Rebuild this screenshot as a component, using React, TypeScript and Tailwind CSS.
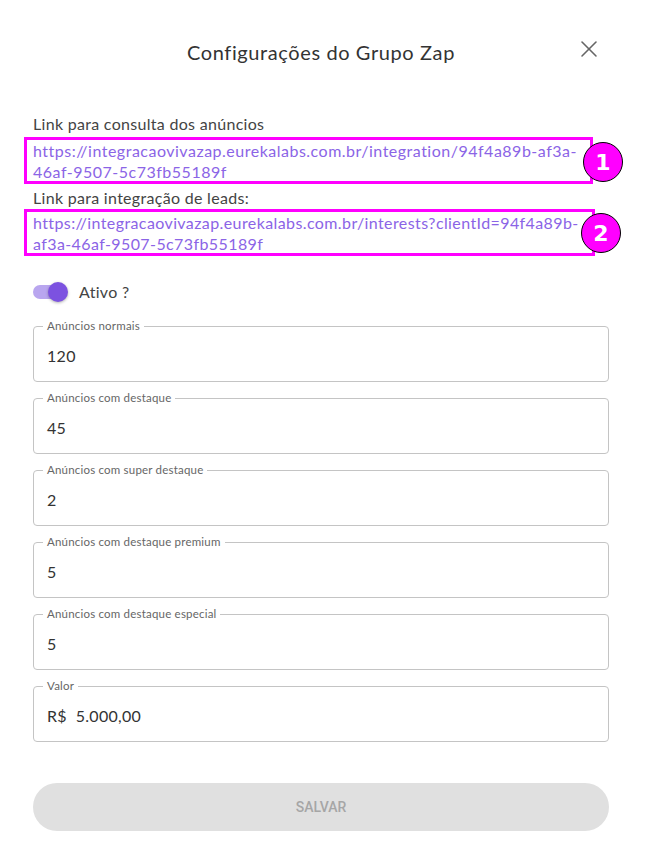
import { X } from "lucide-react";

const fields = [
  { label: "Anúncios normais", value: "120" },
  { label: "Anúncios com destaque", value: "45" },
  { label: "Anúncios com super destaque", value: "2" },
  { label: "Anúncios com destaque premium", value: "5" },
  { label: "Anúncios com destaque especial", value: "5" },
  { label: "Valor", value: "R$  5.000,00" },
];

const Badge = ({ n, className }: { n: number; className: string }) => (
  <span
    className={`absolute flex h-10 w-10 items-center justify-center rounded-full border border-black bg-[#ff00ff] text-[22px] font-bold text-white ${className}`}
    style={{ fontFamily: "'DejaVu Sans', sans-serif" }}
  >
    {n}
  </span>
);

const LinkBox = ({
  lines,
  badge,
  className,
  textClass,
}: {
  lines: string[];
  badge: number;
  className: string;
  textClass: string;
}) => (
  <div className={`relative -ml-[9px] h-[47px] border-[3px] border-[#ff00ff] px-[6px] ${className}`}>
    {lines.map((l) => (
      <div key={l} className={`whitespace-nowrap text-[16px] leading-[21px] text-[#8b64e6] ${textClass}`}>
        {l}
      </div>
    ))}
    <Badge n={badge} className={badge === 1 ? "-right-[33px] top-[2px]" : "-right-[29px] top-[1px]"} />
  </div>
);

const App = () => {
  return (
    <div className="min-h-[850px] bg-white" style={{ fontFamily: "Lato, sans-serif" }}>
      <div className="pl-[33px] pr-[43px]">
        <div className="relative h-[113px] pt-[40px] text-center">
          <h1 className="text-[20px] leading-[24px] tracking-[0.6px] text-[#333]">Configurações do Grupo Zap</h1>
          <X className="absolute right-[6px] top-[35px] h-[28px] w-[28px] text-[#666]" strokeWidth={1.3} />
        </div>

        <div className="text-[16px] leading-[22px] tracking-[0.3px] text-[#444]">Link para consulta dos anúncios</div>
        <LinkBox
          lines={["https://integracaovivazap.eurekalabs.com.br/integration/94f4a89b-af3a-", "46af-9507-5c73fb55189f"]}
          badge={1}
          className="mt-[2px] w-[569px]"
          textClass="tracking-[0.5px]"
        />
        <div className="mt-[3px] text-[16px] leading-[22px] tracking-[0.3px] text-[#444]">Link para integração de leads:</div>
        <LinkBox
          lines={["https://integracaovivazap.eurekalabs.com.br/interests?clientId=94f4a89b-", "af3a-46af-9507-5c73fb55189f"]}
          badge={2}
          className="mt-[0px] w-[571px]"
          textClass="tracking-[0.4px]"
        />

        <div className="mt-[24px] flex items-center gap-[12px]">
          <div className="relative h-[14px] w-[34px] rounded-full bg-[#b9a6ef]">
            <span className="absolute -right-[1px] -top-[3px] h-[20px] w-[20px] rounded-full bg-[#7c52e0] shadow-[0_1px_3px_rgba(0,0,0,0.3)]" />
          </div>
          <span className="text-[16px] tracking-[0.3px] text-[#444]">Ativo ?</span>
        </div>

        <div className="mt-[22px] flex flex-col gap-[16px]">
          {fields.map((f) => (
            <fieldset key={f.label} className="h-[62px] rounded-[4px] border border-[#c4c4c4] px-[9px] -mt-[6px]">
              <legend className="px-[4px] text-[11.5px] leading-[12px] tracking-[0.2px] text-[#666]">{f.label}</legend>
              <div className="whitespace-pre pl-[4px] pt-[12px] text-[16px] tracking-[0.3px] text-[#333]">{f.value}</div>
            </fieldset>
          ))}
        </div>

        <button
          className="mt-[41px] flex h-[48px] w-full items-center justify-center rounded-full bg-[#e0e0e0] text-[14px] font-medium text-[#a6a6a6]"
          style={{ fontFamily: "Roboto, sans-serif" }}
        >
          SALVAR
        </button>
      </div>
    </div>
  );
};

export default App;
